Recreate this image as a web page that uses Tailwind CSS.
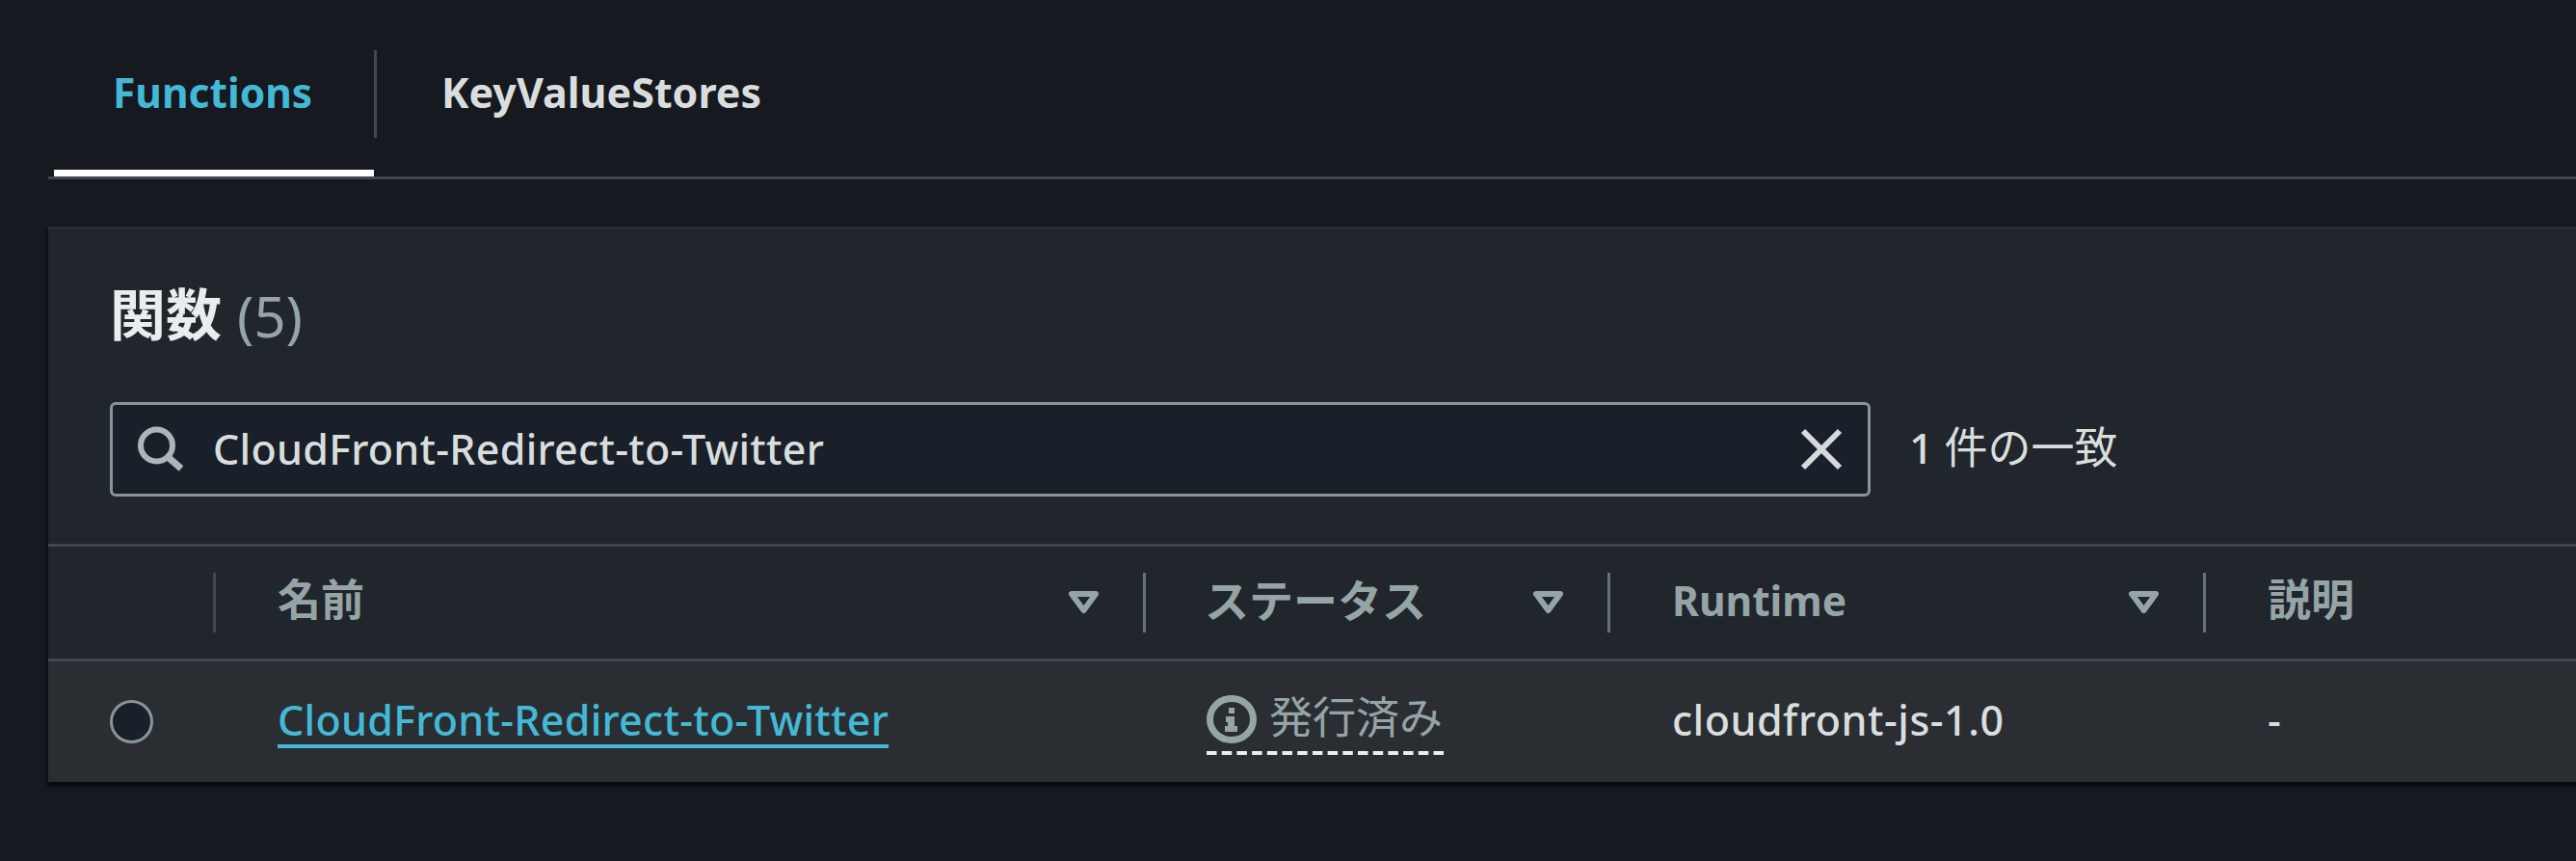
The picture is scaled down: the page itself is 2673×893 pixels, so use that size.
<!DOCTYPE html>
<html lang="ja">
<head>
<meta charset="utf-8">
<title>Functions</title>
<script src="https://cdn.jsdelivr.net/npm/@tailwindcss/browser@4"></script>
</head>
<body class="bg-[#161920] w-[2673px] h-[893px] overflow-hidden font-['Noto_Sans','Noto_Sans_CJK_JP',sans-serif] text-[43px] leading-[60px] text-[#d9dedd] whitespace-nowrap">
<nav class="ml-[50px] h-[186px] border-b-3 border-[#414750] flex font-bold">
  <div class="ml-[6px] w-[332px] h-[183px] border-b-7 border-white pt-[52px]">
    <div class="h-[91px] pl-[61px] pt-[14px] text-[#44b9d6] text-[42.500px]">Functions</div>
  </div>
  <div class="mt-[52px] h-[91px] border-l-3 border-[#414750] pl-[67px] pt-[14px]">KeyValueStores</div>
</nav>
<main class="mt-[49px] ml-[50px] h-[576px] bg-[#21252c] border-t-3 border-[#2a2e33] shadow-[0_3px_4px_1px_#000000b0]">
  <header class="h-[326px] pt-[48px] pl-[64px]">
    <h1 class="h-[80px] leading-[80px] text-[58px] flex gap-[16px]"><b class="text-[#eaeded]">関数</b><span class="mt-[2px] text-[#95a5a6]">(5)</span></h1>
    <div class="mt-[51px] flex items-center">
      <div class="w-[1827px] h-[98px] border-3 border-[#879596] rounded-[6px] bg-[#1a2029] flex items-center pl-[25px] pr-[26px]">
        <svg class="w-[50px] h-[48px]" viewBox="0 0 50 48" fill="none" stroke="#aab7b8" stroke-width="6"><circle cx="20.500" cy="20" r="16.5"/><path d="M31 31 46 44" stroke-width="7"/></svg>
        <span class="ml-[29px] -mt-[1px] font-medium tracking-[0.27px]">CloudFront-Redirect-to-Twitter</span>
        <svg class="ml-auto w-[44px] h-[44px]" viewBox="0 0 44 44" stroke="#d5dbdb" stroke-width="6"><path d="M3 3 41 41M41 3 3 41"/></svg>
      </div>
      <span class="ml-[40px] -mt-[5px] text-[45px]"><span class="font-medium text-[44px]">1 </span>件の一致</span>
    </div>
  </header>
  <div class="grid grid-cols-[174px_965px_482px_618px_1fr]">
    <div class="contents font-bold text-[#95a5a6]">
      <div class="h-[122px] border-y-3 border-[#414750] flex items-center justify-end"><i class="w-[3px] h-[62px] bg-[#414750]"></i></div>
      <div class="h-[122px] border-y-3 border-[#414750] flex items-center pl-[64px]"><span class="-mt-[6px] text-[45px]">名前</span><svg class="ml-auto mr-[45px] w-[33px] h-[26px]" viewBox="0 0 33 26" fill="none" stroke="#95a5a6" stroke-width="6" stroke-linejoin="round"><path d="M4 4H29L16.500 21Z"/></svg><i class="w-[3px] h-[62px] bg-[#687078]"></i></div>
      <div class="h-[122px] border-y-3 border-[#414750] flex items-center pl-[61px]"><span class="-mt-[6px] text-[46px]">ステータス</span><svg class="ml-auto mr-[45px] w-[33px] h-[26px]" viewBox="0 0 33 26" fill="none" stroke="#95a5a6" stroke-width="6" stroke-linejoin="round"><path d="M4 4H29L16.500 21Z"/></svg><i class="w-[3px] h-[62px] bg-[#687078]"></i></div>
      <div class="h-[122px] border-y-3 border-[#414750] flex items-center pl-[64px]"><span class="-mt-[4px] text-[42.500px]">Runtime</span><svg class="ml-auto mr-[45px] w-[33px] h-[26px]" viewBox="0 0 33 26" fill="none" stroke="#95a5a6" stroke-width="6" stroke-linejoin="round"><path d="M4 4H29L16.500 21Z"/></svg><i class="w-[3px] h-[62px] bg-[#687078]"></i></div>
      <div class="h-[122px] border-y-3 border-[#414750] flex items-center pl-[64px]"><span class="-mt-[6px] text-[45px]">説明</span></div>
    </div>
    <div class="contents">
      <div class="h-[125px] bg-[#2a2e33] flex items-center pl-[64px]"><i class="w-[45px] h-[45px] rounded-full border-3 border-[#879596] bg-[#1a2029]"></i></div>
      <div class="h-[125px] bg-[#2a2e33] pl-[64px] pt-[31px]"><a class="inline-block w-[634px] h-[59px] border-b-4 border-[#44b9d6] text-[#44b9d6] font-medium tracking-[0.27px]">CloudFront-Redirect-to-Twitter</a></div>
      <div class="h-[125px] bg-[#2a2e33] pl-[63px] pt-[31px]">
        <div class="w-[246px] h-[68px]">
          <div class="h-[62px] flex text-[#95a5a6]"><svg class="mt-[4px] mr-[13px] w-[52px] h-[50px]" viewBox="0 0 52 50" fill="#95a5a6"><ellipse cx="26" cy="25" rx="22.500" ry="21.500" fill="none" stroke="#95a5a6" stroke-width="7"/><path d="M23 13h6v6h-6zM20 22h9v10h3v6H19v-6h3v-4h-2z"/></svg><span class="text-[45px] -mt-[3px]">発行済み</span></div>
          <svg class="w-[246px] h-[4px]" viewBox="0 0 246 4"><path d="M0 2H246" stroke="#eaeded" stroke-width="4" stroke-dasharray="10.500 5.200"/></svg>
        </div>
      </div>
      <div class="h-[125px] bg-[#2a2e33] pl-[64px] pt-[31px] font-medium tracking-[0.5px]">cloudfront-js-1.0</div>
      <div class="h-[125px] bg-[#2a2e33] pl-[64px] pt-[31px] font-medium">-</div>
    </div>
  </div>
</main>
</body>
</html>
